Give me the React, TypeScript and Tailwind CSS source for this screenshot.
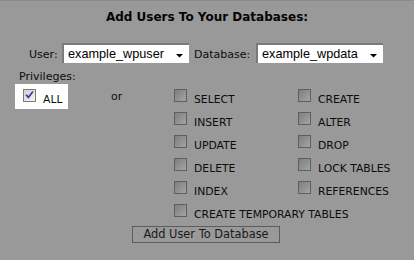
import React from "react";

const Box = ({ checked = false }: { checked?: boolean }) =>
  checked ? (
    <div className="w-[13px] h-[13px] shrink-0 border border-[#7c7c7c] bg-linear-to-br from-[#d2d2d2] to-[#f4f4f4] relative">
      <svg width="11" height="11" viewBox="0 0 11 11" className="absolute left-0 top-0">
        <path d="M2.6 5.4 L4.4 7.4 L8.4 2.2" stroke="#2c3d9c" strokeWidth="1.7" fill="none" strokeLinecap="square" />
      </svg>
    </div>
  ) : (
    <div className="w-[13px] h-[13px] shrink-0 border border-[#5f5f5f] bg-linear-to-br from-[#7e7e7e] to-[#a4a4a4]" />
  );

const Item = ({ label, span = false, last = false }: { label: string; span?: boolean; last?: boolean }) => (
  <div className={`flex items-start ${last ? "h-[22px]" : "h-[23px]"} ${span ? "col-span-2" : ""}`}>
    <Box />
    <span className="ml-[7px] mt-[4px] leading-[13px] text-[10.8px] text-[#0c0c0c] whitespace-nowrap">{label}</span>
  </div>
);

const Select = ({ value }: { value: string }) => (
  <div className="w-[127px] h-[20px] bg-white border-t-2 border-l-2 border-[#7a7a7a] flex items-center pl-[4px] relative">
    <span className="font-['Liberation_Sans',Arial,sans-serif] text-[12.7px] leading-[18px] text-black whitespace-nowrap">{value}</span>
    <svg width="8" height="4" viewBox="0 0 8 4" className="absolute right-[5px] top-[9px]">
      <path d="M0 0 H7 L3.5 3.5 Z" fill="#000" />
    </svg>
  </div>
);

export default function App() {
  return (
    <div className="w-[414px] h-[260px] bg-[#999999] border-t border-[#8a8a8a] font-['DejaVu_Sans',Verdana,sans-serif] text-[#0c0c0c] overflow-hidden">
      <div className="pt-[9px] text-center font-bold text-[12px] leading-[15px] text-[#050505]">Add Users To Your Databases:</div>

      <div className="mt-[18px] flex items-center pl-[29px]">
        <div className="w-[33px] text-[11px] leading-[13px] mt-[2px]">User:</div>
        <Select value="example_wpuser" />
        <div className="ml-[5px] w-[62px] text-[11px] leading-[13px] mt-[2px]">Database:</div>
        <Select value="example_wpdata" />
      </div>

      <div className="mt-[7px] pl-[19px] text-[11px] leading-[13px]">Privileges:</div>

      <div className="mt-[1px] flex items-start">
        <div className="ml-[15px] w-[53px] h-[25px] bg-white flex items-start pl-[8px] pt-[5px]">
          <Box checked />
          <span className="ml-[7px] mt-[4px] leading-[13px] text-[10.8px] text-[#0c0c0c]">ALL</span>
        </div>
        <div className="ml-[43px] w-[63px] mt-[6px] text-[11px] leading-[13px]">or</div>
        <div className="mt-[5px] grid grid-cols-[124px_auto]">
          <Item label="SELECT" />
          <Item label="CREATE" />
          <Item label="INSERT" />
          <Item label="ALTER" />
          <Item label="UPDATE" />
          <Item label="DROP" />
          <Item label="DELETE" />
          <Item label="LOCK TABLES" />
          <Item label="INDEX" />
          <Item label="REFERENCES" />
          <Item label="CREATE TEMPORARY TABLES" span last />
        </div>
      </div>

      <div className="flex">
        <button className="ml-[132px] w-[148px] h-[17px] border border-[#5c5c5c] bg-[#999999] text-[11.4px] leading-[15px] text-[#1a1a1a] flex items-center justify-center">
          Add User To Database
        </button>
      </div>
    </div>
  );
}
